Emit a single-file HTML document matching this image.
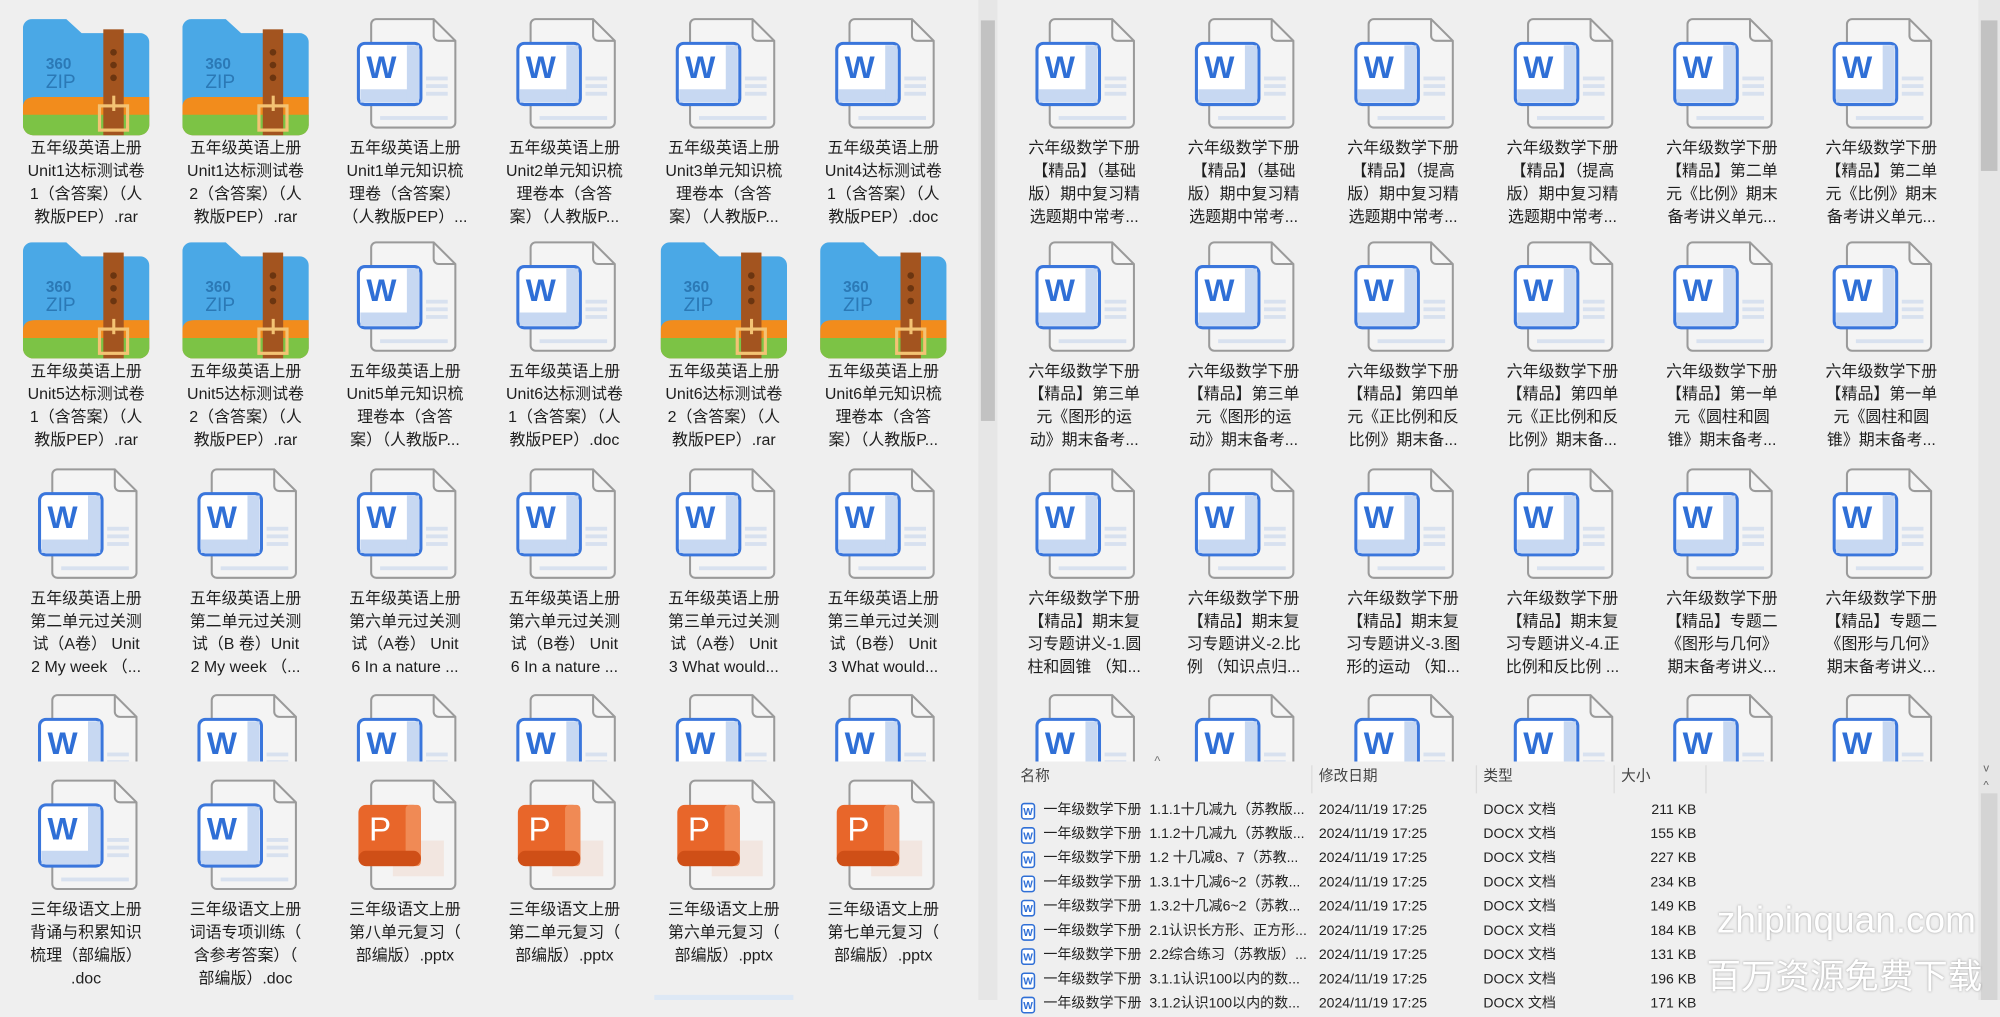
<!DOCTYPE html>
<html><head><meta charset="utf-8">
<style>
html,body{margin:0;padding:0;background:#efefef;overflow:hidden;}
#root{position:absolute;left:0;top:0;width:1568px;height:784px;transform:scale(1.27551);transform-origin:0 0;background:#efefef;font-family:"Liberation Sans","Noto Sans CJK SC",sans-serif;}
.pane{position:absolute;overflow:hidden;}
.row{position:absolute;display:flex;}
.cell{width:125px;position:relative;height:180px;}
.cell svg{position:absolute;left:12.5px;top:0;width:100px;height:100px;}
.cell .t{position:absolute;left:0;width:125px;top:99px;text-align:center;font-size:12.5px;line-height:18px;color:#1e1e1e;white-space:nowrap;}
.sb{position:absolute;background:#e6e6e6;}
.thumb{position:absolute;background:#c2c2c2;}
.hdr{position:absolute;top:600px;height:22px;font-size:11.5px;color:#444;line-height:18px;}
.sep{position:absolute;top:600px;width:1px;height:22px;background:#dcdcdc;}
.lr{position:absolute;left:800px;height:19px;font-size:11px;line-height:19px;color:#222;white-space:nowrap;}
.lr span{position:absolute;top:0;}
.lr span.n{width:210px;overflow:hidden;text-overflow:ellipsis;}
.wm{position:absolute;color:#fff;text-shadow:0 0 2px rgba(0,0,0,0.35);font-family:"Liberation Sans","Noto Sans CJK SC",sans-serif;white-space:nowrap;}
</style></head><body>
<svg width="0" height="0" style="position:absolute">
<defs>
<symbol id="w" viewBox="0 0 100 100">
<path d="M27 7 H72 L89 24 V88 a4 4 0 0 1 -4 4 H27 a4 4 0 0 1 -4 -4 V11 a4 4 0 0 1 4 -4 Z" fill="#f4f4f4" stroke="#9a9a9a" stroke-width="1.6"/>
<path d="M72 7 V20 a4 4 0 0 0 4 4 H89" fill="none" stroke="#9a9a9a" stroke-width="1.6"/>
<rect x="66" y="52" width="17" height="3" fill="#d8e1ef"/>
<rect x="66" y="58" width="17" height="3" fill="#d8e1ef"/>
<rect x="66" y="64" width="17" height="3" fill="#d8e1ef"/>
<rect x="30" y="83" width="53" height="3" fill="#d8e1ef"/>
<rect x="13" y="26" width="49" height="48" rx="5" fill="#fff" stroke="#3a76dc" stroke-width="2.4"/>
<rect x="14.5" y="62" width="46" height="10.5" fill="#c7d8f2"/>
<rect x="51" y="27.5" width="9.5" height="45" fill="#c7d8f2"/>
<text x="31" y="53" font-family="Liberation Sans" font-weight="bold" font-size="25" fill="#2f6fd6" text-anchor="middle">W</text>
</symbol>
<symbol id="p" viewBox="0 0 100 100">
<path d="M27 7 H72 L89 24 V88 a4 4 0 0 1 -4 4 H27 a4 4 0 0 1 -4 -4 V11 a4 4 0 0 1 4 -4 Z" fill="#f4f4f4" stroke="#9a9a9a" stroke-width="1.6"/>
<path d="M72 7 V20 a4 4 0 0 0 4 4 H89" fill="none" stroke="#9a9a9a" stroke-width="1.6"/>
<rect x="40" y="54" width="40" height="28" fill="#f2e6e0"/>
<rect x="13" y="26" width="49" height="48" rx="6" fill="#e8662a"/>
<rect x="50" y="26" width="12" height="48" rx="3" fill="#f08a55"/>
<rect x="13" y="62" width="49" height="12" rx="6" fill="#cf4f17"/>
<text x="30" y="54" font-family="Liberation Sans" font-size="26" fill="#fff" text-anchor="middle">P</text>
</symbol>
<symbol id="z" viewBox="0 0 100 100">
<path d="M0 14 a7 7 0 0 1 7 -7 H34 L46 18 H92 a7 7 0 0 1 7 7 V90 a8 8 0 0 1 -8 8 H8 a8 8 0 0 1 -8 -8 Z" fill="#4aa8e6"/>
<path d="M0 76 Q0 68 10 68 H99 V90 a8 8 0 0 1 -8 8 H8 a8 8 0 0 1 -8 -8 Z" fill="#f28c1c"/>
<path d="M0 82 H99 V90 a8 8 0 0 1 -8 8 H8 a8 8 0 0 1 -8 -8 Z" fill="#7cc345"/>
<rect x="63" y="15" width="16" height="83" fill="#a3541f"/>
<circle cx="71" cy="33" r="2.6" fill="#6b3510"/><circle cx="71" cy="43" r="2.6" fill="#6b3510"/><circle cx="71" cy="53" r="2.6" fill="#6b3510"/>
<rect x="60" y="75" width="22" height="19" fill="none" stroke="#f3c374" stroke-width="2.5"/>
<rect x="70" y="67" width="2.4" height="12" fill="#f3c374"/>
<text x="18" y="46" font-family="Liberation Sans" font-size="12" fill="#2b79b6" font-weight="bold">360</text>
<text x="18" y="61" font-family="Liberation Sans" font-size="15" fill="#2b79b6">ZIP</text>
</symbol>
<symbol id="sw" viewBox="0 0 12 14">
<rect x="1" y="1" width="10" height="12" rx="2" fill="#fff" stroke="#2f6fd6" stroke-width="1.2"/>
<text x="6" y="10" font-size="8" font-family="Liberation Sans" font-weight="bold" fill="#2f6fd6" text-anchor="middle">W</text>
</symbol>
</defs></svg>
<div id="root">

<div class="pane" style="left:0;top:0;width:766px;height:597px;">
<div class="row" style="left:5px;top:8px;">
<div class="cell"><svg><use href="#z"/></svg><div class="t">五年级英语上册<br>Unit1达标测试卷<br>1（含答案）（人<br>教版PEP）.rar</div></div>
<div class="cell"><svg><use href="#z"/></svg><div class="t">五年级英语上册<br>Unit1达标测试卷<br>2（含答案）（人<br>教版PEP）.rar</div></div>
<div class="cell"><svg><use href="#w"/></svg><div class="t">五年级英语上册<br>Unit1单元知识梳<br>理卷（含答案）<br>（人教版PEP）...</div></div>
<div class="cell"><svg><use href="#w"/></svg><div class="t">五年级英语上册<br>Unit2单元知识梳<br>理卷本（含答<br>案）（人教版P...</div></div>
<div class="cell"><svg><use href="#w"/></svg><div class="t">五年级英语上册<br>Unit3单元知识梳<br>理卷本（含答<br>案）（人教版P...</div></div>
<div class="cell"><svg><use href="#w"/></svg><div class="t">五年级英语上册<br>Unit4达标测试卷<br>1（含答案）（人<br>教版PEP）.doc</div></div>
</div>
<div class="row" style="left:5px;top:183px;">
<div class="cell"><svg><use href="#z"/></svg><div class="t">五年级英语上册<br>Unit5达标测试卷<br>1（含答案）（人<br>教版PEP）.rar</div></div>
<div class="cell"><svg><use href="#z"/></svg><div class="t">五年级英语上册<br>Unit5达标测试卷<br>2（含答案）（人<br>教版PEP）.rar</div></div>
<div class="cell"><svg><use href="#w"/></svg><div class="t">五年级英语上册<br>Unit5单元知识梳<br>理卷本（含答<br>案）（人教版P...</div></div>
<div class="cell"><svg><use href="#w"/></svg><div class="t">五年级英语上册<br>Unit6达标测试卷<br>1（含答案）（人<br>教版PEP）.doc</div></div>
<div class="cell"><svg><use href="#z"/></svg><div class="t">五年级英语上册<br>Unit6达标测试卷<br>2（含答案）（人<br>教版PEP）.rar</div></div>
<div class="cell"><svg><use href="#z"/></svg><div class="t">五年级英语上册<br>Unit6单元知识梳<br>理卷本（含答<br>案）（人教版P...</div></div>
</div>
<div class="row" style="left:5px;top:361px;">
<div class="cell"><svg><use href="#w"/></svg><div class="t">五年级英语上册<br>第二单元过关测<br>试（A卷） Unit<br>2 My week （...</div></div>
<div class="cell"><svg><use href="#w"/></svg><div class="t">五年级英语上册<br>第二单元过关测<br>试（B 卷）Unit<br>2 My week （...</div></div>
<div class="cell"><svg><use href="#w"/></svg><div class="t">五年级英语上册<br>第六单元过关测<br>试（A卷） Unit<br>6 In a nature ...</div></div>
<div class="cell"><svg><use href="#w"/></svg><div class="t">五年级英语上册<br>第六单元过关测<br>试（B卷） Unit<br>6 In a nature ...</div></div>
<div class="cell"><svg><use href="#w"/></svg><div class="t">五年级英语上册<br>第三单元过关测<br>试（A卷） Unit<br>3 What would...</div></div>
<div class="cell"><svg><use href="#w"/></svg><div class="t">五年级英语上册<br>第三单元过关测<br>试（B卷） Unit<br>3 What would...</div></div>
</div>
<div class="row" style="left:5px;top:538px;">
<div class="cell"><svg><use href="#w"/></svg></div><div class="cell"><svg><use href="#w"/></svg></div><div class="cell"><svg><use href="#w"/></svg></div><div class="cell"><svg><use href="#w"/></svg></div><div class="cell"><svg><use href="#w"/></svg></div><div class="cell"><svg><use href="#w"/></svg></div>
</div>
</div>
<div class="pane" style="left:0;top:597px;width:766px;height:187px;">
<div class="row" style="left:5px;top:8px;">
<div class="cell"><svg><use href="#w"/></svg><div class="t">三年级语文上册<br>背诵与积累知识<br>梳理（部编版）<br>.doc</div></div>
<div class="cell"><svg><use href="#w"/></svg><div class="t">三年级语文上册<br>词语专项训练（<br>含参考答案）（<br>部编版）.doc</div></div>
<div class="cell"><svg><use href="#p"/></svg><div class="t">三年级语文上册<br>第八单元复习（<br>部编版）.pptx</div></div>
<div class="cell"><svg><use href="#p"/></svg><div class="t">三年级语文上册<br>第二单元复习（<br>部编版）.pptx</div></div>
<div class="cell"><svg><use href="#p"/></svg><div class="t">三年级语文上册<br>第六单元复习（<br>部编版）.pptx</div></div>
<div class="cell"><svg><use href="#p"/></svg><div class="t">三年级语文上册<br>第七单元复习（<br>部编版）.pptx</div></div>
</div>
<div style="position:absolute;left:513px;top:183px;width:109px;height:4px;background:#dde8f5;"></div>
</div>
<div class="sb" style="left:767px;top:0;width:15px;height:784px;"></div>
<div class="thumb" style="left:769px;top:16px;width:11px;height:314px;"></div>

<div class="pane" style="left:783px;top:0;width:768px;height:597px;">
<div class="row" style="left:4.5px;top:8px;">
<div class="cell"><svg><use href="#w"/></svg><div class="t">六年级数学下册<br>【精品】（基础<br>版）期中复习精<br>选题期中常考...</div></div>
<div class="cell"><svg><use href="#w"/></svg><div class="t">六年级数学下册<br>【精品】（基础<br>版）期中复习精<br>选题期中常考...</div></div>
<div class="cell"><svg><use href="#w"/></svg><div class="t">六年级数学下册<br>【精品】（提高<br>版）期中复习精<br>选题期中常考...</div></div>
<div class="cell"><svg><use href="#w"/></svg><div class="t">六年级数学下册<br>【精品】（提高<br>版）期中复习精<br>选题期中常考...</div></div>
<div class="cell"><svg><use href="#w"/></svg><div class="t">六年级数学下册<br>【精品】第二单<br>元《比例》期末<br>备考讲义单元...</div></div>
<div class="cell"><svg><use href="#w"/></svg><div class="t">六年级数学下册<br>【精品】第二单<br>元《比例》期末<br>备考讲义单元...</div></div>
</div>
<div class="row" style="left:4.5px;top:183px;">
<div class="cell"><svg><use href="#w"/></svg><div class="t">六年级数学下册<br>【精品】第三单<br>元《图形的运<br>动》期末备考...</div></div>
<div class="cell"><svg><use href="#w"/></svg><div class="t">六年级数学下册<br>【精品】第三单<br>元《图形的运<br>动》期末备考...</div></div>
<div class="cell"><svg><use href="#w"/></svg><div class="t">六年级数学下册<br>【精品】第四单<br>元《正比例和反<br>比例》期末备...</div></div>
<div class="cell"><svg><use href="#w"/></svg><div class="t">六年级数学下册<br>【精品】第四单<br>元《正比例和反<br>比例》期末备...</div></div>
<div class="cell"><svg><use href="#w"/></svg><div class="t">六年级数学下册<br>【精品】第一单<br>元《圆柱和圆<br>锥》期末备考...</div></div>
<div class="cell"><svg><use href="#w"/></svg><div class="t">六年级数学下册<br>【精品】第一单<br>元《圆柱和圆<br>锥》期末备考...</div></div>
</div>
<div class="row" style="left:4.5px;top:361px;">
<div class="cell"><svg><use href="#w"/></svg><div class="t">六年级数学下册<br>【精品】期末复<br>习专题讲义-1.圆<br>柱和圆锥 （知...</div></div>
<div class="cell"><svg><use href="#w"/></svg><div class="t">六年级数学下册<br>【精品】期末复<br>习专题讲义-2.比<br>例 （知识点归...</div></div>
<div class="cell"><svg><use href="#w"/></svg><div class="t">六年级数学下册<br>【精品】期末复<br>习专题讲义-3.图<br>形的运动 （知...</div></div>
<div class="cell"><svg><use href="#w"/></svg><div class="t">六年级数学下册<br>【精品】期末复<br>习专题讲义-4.正<br>比例和反比例 ...</div></div>
<div class="cell"><svg><use href="#w"/></svg><div class="t">六年级数学下册<br>【精品】专题二<br>《图形与几何》<br>期末备考讲义...</div></div>
<div class="cell"><svg><use href="#w"/></svg><div class="t">六年级数学下册<br>【精品】专题二<br>《图形与几何》<br>期末备考讲义...</div></div>
</div>
<div class="row" style="left:4.5px;top:538px;">
<div class="cell"><svg><use href="#w"/></svg></div><div class="cell"><svg><use href="#w"/></svg></div><div class="cell"><svg><use href="#w"/></svg></div><div class="cell"><svg><use href="#w"/></svg></div><div class="cell"><svg><use href="#w"/></svg></div><div class="cell"><svg><use href="#w"/></svg></div>
</div>
</div>
<div class="sb" style="left:1551px;top:0;width:17px;height:597px;"></div>
<div class="thumb" style="left:1553px;top:16px;width:13px;height:118px;"></div>

<div style="position:absolute;left:905px;top:592px;font-size:10px;color:#777;">^</div>
<div class="hdr" style="left:800px;">名称</div>
<div class="sep" style="left:1028px;"></div>
<div class="hdr" style="left:1034px;">修改日期</div>
<div class="sep" style="left:1157px;"></div>
<div class="hdr" style="left:1163px;">类型</div>
<div class="sep" style="left:1265px;"></div>
<div class="hdr" style="left:1271px;">大小</div>
<div class="sep" style="left:1337px;"></div>

<div class="lr" style="top:626px;"><svg style="position:absolute;left:0;top:3px;width:12px;height:14px"><use href="#sw"/></svg><span class="n" style="left:18px">一年级数学下册&nbsp; 1.1.1十几减九（苏教版...</span><span style="left:234px">2024/11/19 17:25</span><span style="left:363px">DOCX 文档</span><span style="left:470px;width:60px;text-align:right">211 KB</span></div>
<div class="lr" style="top:645px;"><svg style="position:absolute;left:0;top:3px;width:12px;height:14px"><use href="#sw"/></svg><span class="n" style="left:18px">一年级数学下册&nbsp; 1.1.2十几减九（苏教版...</span><span style="left:234px">2024/11/19 17:25</span><span style="left:363px">DOCX 文档</span><span style="left:470px;width:60px;text-align:right">155 KB</span></div>
<div class="lr" style="top:664px;"><svg style="position:absolute;left:0;top:3px;width:12px;height:14px"><use href="#sw"/></svg><span class="n" style="left:18px">一年级数学下册&nbsp; 1.2 十几减8、7（苏教...</span><span style="left:234px">2024/11/19 17:25</span><span style="left:363px">DOCX 文档</span><span style="left:470px;width:60px;text-align:right">227 KB</span></div>
<div class="lr" style="top:683px;"><svg style="position:absolute;left:0;top:3px;width:12px;height:14px"><use href="#sw"/></svg><span class="n" style="left:18px">一年级数学下册&nbsp; 1.3.1十几减6~2（苏教...</span><span style="left:234px">2024/11/19 17:25</span><span style="left:363px">DOCX 文档</span><span style="left:470px;width:60px;text-align:right">234 KB</span></div>
<div class="lr" style="top:702px;"><svg style="position:absolute;left:0;top:3px;width:12px;height:14px"><use href="#sw"/></svg><span class="n" style="left:18px">一年级数学下册&nbsp; 1.3.2十几减6~2（苏教...</span><span style="left:234px">2024/11/19 17:25</span><span style="left:363px">DOCX 文档</span><span style="left:470px;width:60px;text-align:right">149 KB</span></div>
<div class="lr" style="top:721px;"><svg style="position:absolute;left:0;top:3px;width:12px;height:14px"><use href="#sw"/></svg><span class="n" style="left:18px">一年级数学下册&nbsp; 2.1认识长方形、正方形...</span><span style="left:234px">2024/11/19 17:25</span><span style="left:363px">DOCX 文档</span><span style="left:470px;width:60px;text-align:right">184 KB</span></div>
<div class="lr" style="top:740px;"><svg style="position:absolute;left:0;top:3px;width:12px;height:14px"><use href="#sw"/></svg><span class="n" style="left:18px">一年级数学下册&nbsp; 2.2综合练习（苏教版）...</span><span style="left:234px">2024/11/19 17:25</span><span style="left:363px">DOCX 文档</span><span style="left:470px;width:60px;text-align:right">131 KB</span></div>
<div class="lr" style="top:759px;"><svg style="position:absolute;left:0;top:3px;width:12px;height:14px"><use href="#sw"/></svg><span class="n" style="left:18px">一年级数学下册&nbsp; 3.1.1认识100以内的数...</span><span style="left:234px">2024/11/19 17:25</span><span style="left:363px">DOCX 文档</span><span style="left:470px;width:60px;text-align:right">196 KB</span></div>
<div class="lr" style="top:778px;"><svg style="position:absolute;left:0;top:3px;width:12px;height:14px"><use href="#sw"/></svg><span class="n" style="left:18px">一年级数学下册&nbsp; 3.1.2认识100以内的数...</span><span style="left:234px">2024/11/19 17:25</span><span style="left:363px">DOCX 文档</span><span style="left:470px;width:60px;text-align:right">171 KB</span></div>

<div class="sb" style="left:1551px;top:597px;width:17px;height:187px;"></div>
<div style="position:absolute;left:1555px;top:597px;font-size:9px;color:#666;">v</div>
<div style="position:absolute;left:1555px;top:610px;font-size:9px;color:#666;">^</div>
<div class="thumb" style="left:1553px;top:622px;width:13px;height:162px;background:#d4d4d4;"></div>

<div class="wm" style="left:1346px;top:706px;font-size:29px;">zhipinquan.com</div>
<div class="wm" style="left:1338px;top:744px;font-size:27px;">百万资源免费下载</div>
</div>
</body></html>
